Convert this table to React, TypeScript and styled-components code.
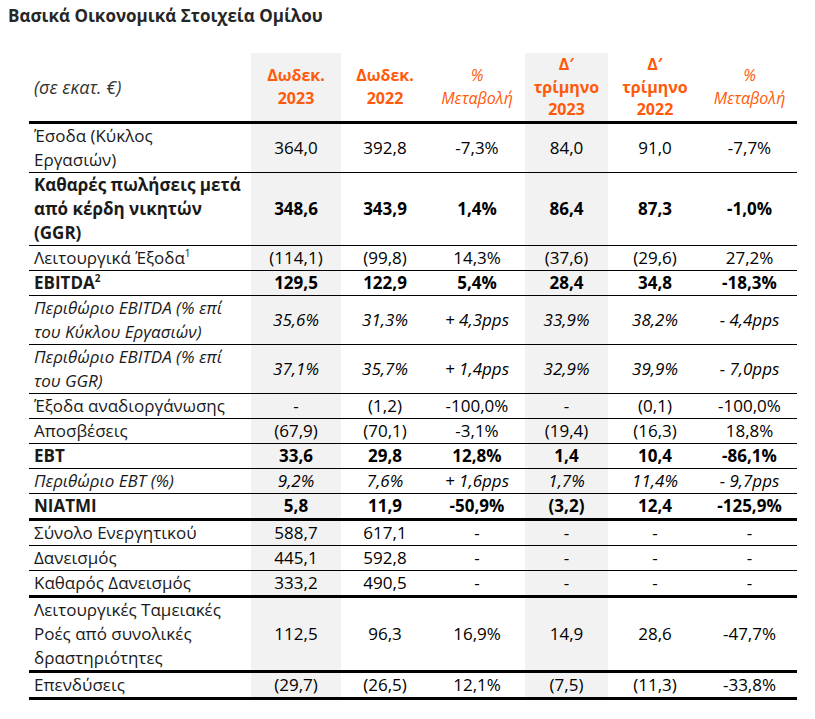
import React from 'react';
import styled, { createGlobalStyle, css } from 'styled-components';

const GlobalStyle = createGlobalStyle`
	body {
		margin: 0;
		background: #fff;
		font-family: 'Open Sans', 'Liberation Sans', sans-serif;
		color: #000;
	}
`;

const Page = styled.div`
	padding: 5px 8px 20px 8px;
`;

const Title = styled.h1`
	margin: 0 0 26px 0;
	font-size: 17px;
	font-weight: 700;
	line-height: 22px;
	color: #262626;
`;

const Table = styled.table`
	margin-left: 21px;
	width: 768px;
	border-collapse: collapse;
	table-layout: fixed;
	font-size: 17px;
	line-height: 24px;
	white-space: nowrap;
`;

const HeadRow = styled.tr`
	height: 65px;
	border-bottom: 3px solid #000;
`;

const HeadCell = styled.th<{ $shaded?: boolean; $strong?: boolean }>`
	padding: 0;
	text-align: center;
	vertical-align: middle;
	color: #ff5a0a;
	font-size: 16px;
	line-height: 22.5px;
	font-weight: ${(p) => (p.$strong ? 700 : 400)};
	font-style: ${(p) => (p.$strong ? 'normal' : 'italic')};
	background: ${(p) => (p.$shaded ? '#f2f2f2' : 'transparent')};
`;

const UnitCell = styled.th`
	padding: 0 0 0 5px;
	text-align: left;
	font-size: 18px;
	font-weight: 400;
	font-style: italic;
	color: #333;
`;

const Row = styled.tr<{ $thick?: boolean }>`
	border-bottom: ${(p) => (p.$thick ? '3px' : '1px')} solid #000;
`;

const textStyle = css<{ $bold?: boolean; $italic?: boolean }>`
	font-weight: ${(p) => (p.$bold ? 700 : 400)};
	font-style: ${(p) => (p.$italic ? 'italic' : 'normal')};
`;

const Label = styled.td<{ $bold?: boolean; $italic?: boolean }>`
	padding: 0 0 0 5px;
	text-align: left;
	vertical-align: middle;
	color: #1a1a1a;
	${textStyle}
`;

const Value = styled.td<{ $bold?: boolean; $italic?: boolean; $shaded?: boolean }>`
	padding: 0;
	text-align: center;
	vertical-align: middle;
	background: ${(p) => (p.$shaded ? '#f2f2f2' : 'transparent')};
	${textStyle}
`;

const Sup = styled.sup`
	font-size: 10px;
	line-height: 0;
	vertical-align: 7px;
`;

type DataRow = {
	label: React.ReactNode;
	values: string[];
	bold?: boolean;
	italic?: boolean;
	thick?: boolean;
};

const rows: DataRow[] = [
	{ label: <>Έσοδα (Κύκλος<br />Εργασιών)</>, values: ['364,0', '392,8', '-7,3%', '84,0', '91,0', '-7,7%'] },
	{
		label: <>Καθαρές πωλήσεις μετά<br />από κέρδη νικητών<br />(GGR)</>,
		values: ['348,6', '343,9', '1,4%', '86,4', '87,3', '-1,0%'],
		bold: true,
	},
	{ label: <>Λειτουργικά Έξοδα<Sup>1</Sup></>, values: ['(114,1)', '(99,8)', '14,3%', '(37,6)', '(29,6)', '27,2%'] },
	{ label: <>EBITDA<Sup>2</Sup></>, values: ['129,5', '122,9', '5,4%', '28,4', '34,8', '-18,3%'], bold: true },
	{
		label: <>Περιθώριο EBITDA (% επί<br />του Κύκλου Εργασιών)</>,
		values: ['35,6%', '31,3%', '+ 4,3pps', '33,9%', '38,2%', '- 4,4pps'],
		italic: true,
	},
	{
		label: <>Περιθώριο EBITDA (% επί<br />του GGR)</>,
		values: ['37,1%', '35,7%', '+ 1,4pps', '32,9%', '39,9%', '- 7,0pps'],
		italic: true,
	},
	{ label: 'Έξοδα αναδιοργάνωσης', values: ['-', '(1,2)', '-100,0%', '-', '(0,1)', '-100,0%'] },
	{ label: 'Αποσβέσεις', values: ['(67,9)', '(70,1)', '-3,1%', '(19,4)', '(16,3)', '18,8%'] },
	{ label: 'EBT', values: ['33,6', '29,8', '12,8%', '1,4', '10,4', '-86,1%'], bold: true },
	{ label: 'Περιθώριο EBT (%)', values: ['9,2%', '7,6%', '+ 1,6pps', '1,7%', '11,4%', '- 9,7pps'], italic: true },
	{ label: 'NIATMI', values: ['5,8', '11,9', '-50,9%', '(3,2)', '12,4', '-125,9%'], bold: true, thick: true },
	{ label: 'Σύνολο Ενεργητικού', values: ['588,7', '617,1', '-', '-', '-', '-'] },
	{ label: 'Δανεισμός', values: ['445,1', '592,8', '-', '-', '-', '-'] },
	{ label: 'Καθαρός Δανεισμός', values: ['333,2', '490,5', '-', '-', '-', '-'], thick: true },
	{
		label: <>Λειτουργικές Ταμειακές<br />Ροές από συνολικές<br />δραστηριότητες</>,
		values: ['112,5', '96,3', '16,9%', '14,9', '28,6', '-47,7%'],
		thick: true,
	},
	{ label: 'Επενδύσεις', values: ['(29,7)', '(26,5)', '12,1%', '(7,5)', '(11,3)', '-33,8%'], thick: true },
];

const widths = [222, 90, 88, 96, 83, 94, 95];
const shadedCols = [0, 3];

export default function App() {
	return (
		<Page>
			<GlobalStyle />
			<Title>Βασικά Οικονομικά Στοιχεία Ομίλου</Title>
			<Table>
				<colgroup>
					{widths.map((w, i) => (
						<col key={i} style={{ width: w }} />
					))}
				</colgroup>
				<thead>
					<HeadRow>
						<UnitCell>(σε εκατ. €)</UnitCell>
						<HeadCell $shaded $strong>Δωδεκ.<br />2023</HeadCell>
						<HeadCell $strong>Δωδεκ.<br />2022</HeadCell>
						<HeadCell>%<br />Μεταβολή</HeadCell>
						<HeadCell $shaded $strong>Δ′<br />τρίμηνο<br />2023</HeadCell>
						<HeadCell $strong>Δ′<br />τρίμηνο<br />2022</HeadCell>
						<HeadCell>%<br />Μεταβολή</HeadCell>
					</HeadRow>
				</thead>
				<tbody>
					{rows.map((r, i) => (
						<Row key={i} $thick={r.thick}>
							<Label $bold={r.bold} $italic={r.italic}>{r.label}</Label>
							{r.values.map((v, j) => (
								<Value key={j} $bold={r.bold} $italic={r.italic} $shaded={shadedCols.includes(j)}>
									{v}
								</Value>
							))}
						</Row>
					))}
				</tbody>
			</Table>
		</Page>
	);
}
